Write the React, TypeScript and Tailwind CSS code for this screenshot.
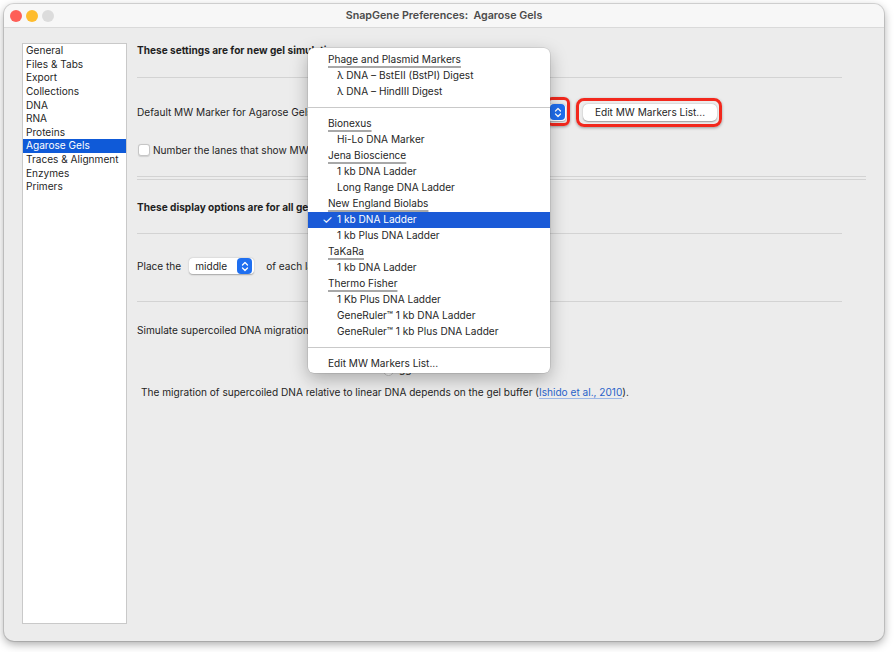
const sidebarItems = [
  "General",
  "Files & Tabs",
  "Export",
  "Collections",
  "DNA",
  "RNA",
  "Proteins",
  "Agarose Gels",
  "Traces & Alignment",
  "Enzymes",
  "Primers",
];

type MenuRow =
  | { kind: "header"; label: string }
  | { kind: "item"; label: string; checked?: boolean }
  | { kind: "sep" };

const markerMenu: MenuRow[] = [
  { kind: "header", label: "Phage and Plasmid Markers" },
  { kind: "item", label: "λ DNA – BstEII (BstPI) Digest" },
  { kind: "item", label: "λ DNA – HindIII Digest" },
  { kind: "sep" },
  { kind: "header", label: "Bionexus" },
  { kind: "item", label: "Hi-Lo DNA Marker" },
  { kind: "header", label: "Jena Bioscience" },
  { kind: "item", label: "1 kb DNA Ladder" },
  { kind: "item", label: "Long Range DNA Ladder" },
  { kind: "header", label: "New England Biolabs" },
  { kind: "item", label: "1 kb DNA Ladder", checked: true },
  { kind: "item", label: "1 kb Plus DNA Ladder" },
  { kind: "header", label: "TaKaRa" },
  { kind: "item", label: "1 kb DNA Ladder" },
  { kind: "header", label: "Thermo Fisher" },
  { kind: "item", label: "1 Kb Plus DNA Ladder" },
  { kind: "item", label: "GeneRuler™ 1 kb DNA Ladder" },
  { kind: "item", label: "GeneRuler™ 1 kb Plus DNA Ladder" },
  { kind: "sep" },
  { kind: "header", label: "Edit MW Markers List..." },
];

function Stepper() {
  return (
    <span className="flex h-[16px] w-[15px] items-center justify-center rounded-[4px] bg-[#1f6ff0]">
      <svg width="8" height="11" viewBox="0 0 8 11" fill="none">
        <path d="M1.5 4 L4 1.5 L6.5 4" stroke="white" strokeWidth="1.3" strokeLinecap="round" strokeLinejoin="round" />
        <path d="M1.5 7 L4 9.5 L6.5 7" stroke="white" strokeWidth="1.3" strokeLinecap="round" strokeLinejoin="round" />
      </svg>
    </span>
  );
}

function Separator({ wide }: { wide?: boolean }) {
  return <div className={wide ? "h-px w-[729px] bg-[#d3d3d3]" : "h-px w-[705px] bg-[#d3d3d3]"} />;
}

function MarkerMenu() {
  return (
    <div className="absolute left-[304px] top-[44px] w-[242px] rounded-[6px] bg-white pb-[1px] pt-[4px] shadow-[0_6px_18px_rgba(0,0,0,0.28),0_0_0_0.5px_rgba(0,0,0,0.15)]">
      {markerMenu.map((row, i) => {
        if (row.kind === "sep") {
          return (
            <div key={i} className="h-[16px] pt-[7px]">
              <div className="h-px w-full bg-[#c9c9c9]" />
            </div>
          );
        }
        if (row.kind === "header") {
          const isEdit = row.label.startsWith("Edit");
          return (
            <div key={i} className="flex h-[16px] items-center pl-[20px] text-[#262626]">
              <span className={isEdit ? "" : "underline decoration-[#a8a8a8] decoration-[1.5px] underline-offset-[3px]"}>
                {row.label}
              </span>
            </div>
          );
        }
        return (
          <div
            key={i}
            className={
              row.checked
                ? "relative flex h-[16px] items-center bg-[#1a5ad7] pl-[29px] text-white"
                : "relative flex h-[16px] items-center pl-[29px] text-[#262626]"
            }
          >
            {row.checked ? <span className="absolute left-[14px] text-[12px]">✓</span> : null}
            {row.label}
          </div>
        );
      })}
    </div>
  );
}

export default function App() {
  return (
    <div className="h-[652px] w-[894px] bg-white p-[4px] font-['Inter','Liberation_Sans',sans-serif] text-[10.1px] text-[#1f1f1f]">
      <div className="relative flex h-[637px] w-[880px] flex-col overflow-hidden rounded-[10px] bg-[#ececec] shadow-[0_3px_10px_rgba(0,0,0,0.35),0_0_0_1px_rgba(0,0,0,0.12)]">
        {/* title bar */}
        <div className="relative flex h-[24px] items-center justify-center border-b border-[#dadada] bg-[#f7f7f7] pt-[2px]">
          <div className="absolute left-[6px] top-[6px] flex gap-[4px]">
            <span className="h-[12px] w-[12px] rounded-full bg-[#fe5f57]" />
            <span className="h-[12px] w-[12px] rounded-full bg-[#febc2e]" />
            <span className="h-[12px] w-[12px] rounded-full bg-[#dcdcdc]" />
          </div>
          <span className="text-[10.7px] font-semibold text-[#4b4b4b]">SnapGene Preferences:&nbsp; Agarose Gels</span>
        </div>

        <div className="flex flex-1 pl-[18px] pt-[15px]">
          {/* category list */}
          <div className="h-[581px] w-[105px] border border-[#c9c9c9] bg-white">
            {sidebarItems.map((item) => (
              <div
                key={item}
                className={
                  item === "Agarose Gels"
                    ? "flex h-[13.6px] items-center whitespace-nowrap bg-[#0f5ad8] pl-[3px] text-white"
                    : "flex h-[13.6px] items-center whitespace-nowrap pl-[3px]"
                }
              >
                {item}
              </div>
            ))}
          </div>

          {/* settings pane */}
          <div className="ml-[10px] flex flex-col whitespace-nowrap">
            <div className="flex h-[14px] items-center pt-[2px] font-bold">These settings are for new gel simulations.</div>
            <div className="mt-[20px]">
              <Separator />
            </div>

            <div className="mt-[22px] flex h-[24px] items-center">
              <span className="w-[178px] pt-[2px]">Default MW Marker for Agarose Gels:</span>
              <div className="flex h-[17px] w-[251px] items-center justify-end rounded-[4px] bg-white pr-[1px] shadow-[0_0.5px_1.5px_rgba(0,0,0,0.3)]">
                <span className="relative">
                  <Stepper />
                  <span className="absolute -left-[4px] -top-[7px] h-[29px] w-[24px] rounded-[6px] border-[3px] border-[#f2281d] shadow-[0_1px_3px_rgba(0,0,0,0.35)]" />
                </span>
              </div>
              <div className="relative ml-[17px]">
                <button className="flex h-[17px] w-[134px] items-center justify-center rounded-[5px] bg-white pt-[1px] text-[10.1px] text-[#1f1f1f] shadow-[0_0.5px_1.5px_rgba(0,0,0,0.35)]">
                  Edit MW Markers List...
                </button>
                <span className="absolute -left-[7px] -top-[6px] h-[29px] w-[146px] rounded-[8px] border-[3px] border-[#f2281d] shadow-[0_1px_3px_rgba(0,0,0,0.35)]" />
              </div>
            </div>

            <div className="mt-[18px] flex h-[16px] items-center">
              <span className="ml-[1px] h-[12px] w-[12px] rounded-[3px] border border-[#c6c6c6] bg-white shadow-[0_0.5px_1px_rgba(0,0,0,0.12)]" />
              <span className="ml-[3px] pt-[2px]">Number the lanes that show MW</span>
            </div>

            <div className="mt-[18px] flex flex-col gap-[2px]">
              <Separator wide />
              <Separator wide />
            </div>

            <div className="mt-[20px] flex h-[14px] items-center pt-[2px] font-bold">These display options are for all gels.</div>
            <div className="mt-[19px]">
              <Separator />
            </div>

            <div className="mt-[22px] flex h-[20px] items-center">
              <span className="pt-[2px]">Place the</span>
              <div className="ml-[8px] flex h-[16px] w-[65px] items-center justify-between rounded-[4px] bg-white pl-[6px] pr-[2px] shadow-[0_0.5px_1.5px_rgba(0,0,0,0.3)]">
                <span className="pt-[1px]">middle</span>
                <Stepper />
              </div>
              <span className="ml-[12px] pt-[2px]">of each lane</span>
            </div>

            <div className="mt-[25px]">
              <Separator />
            </div>

            <div className="mt-[21px] flex h-[14px] items-center pt-[2px]">Simulate supercoiled DNA migration</div>

            <div className="mt-[24px] flex h-[14px] items-center pl-[246px]">
              <span className="mt-[4px] h-[11px] w-[11px] rounded-full border border-[#c6c6c6] bg-white" />
              <span className="ml-[5px] mt-[4px]">gg</span>
            </div>

            <div className="ml-[4px] mt-[10px] flex h-[14px] items-center pt-[2px]">
              <span>
                The migration of supercoiled DNA relative to linear DNA depends on the gel buffer (
                <span className="text-[#2a63c9] underline decoration-[#9db8e6] underline-offset-2">Ishido et al., 2010</span>
                ).
              </span>
            </div>
          </div>
        </div>

        <MarkerMenu />
      </div>
    </div>
  );
}
